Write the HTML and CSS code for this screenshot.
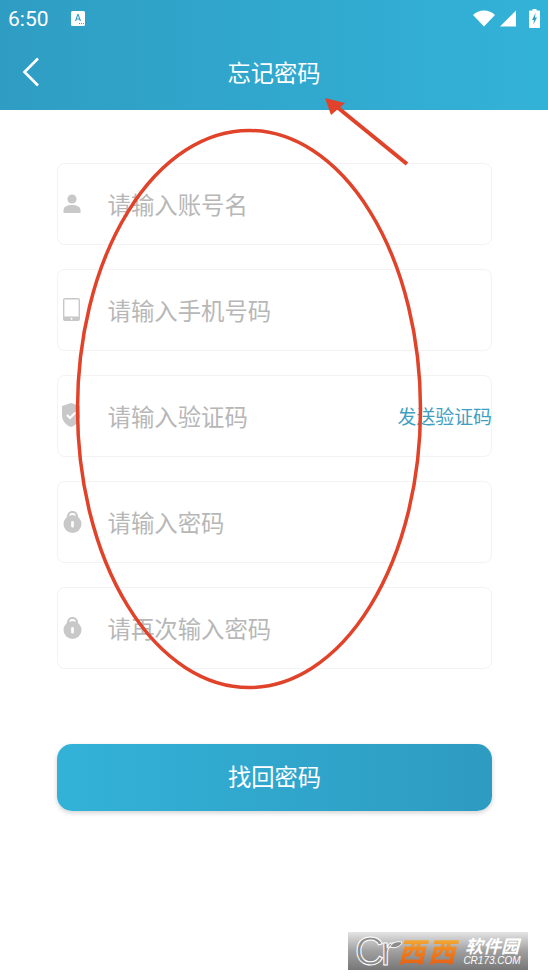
FILE: index.html
```html
<!DOCTYPE html>
<html lang="zh">
<head>
<meta charset="utf-8">
<title>忘记密码</title>
<link rel="stylesheet" href="styles.css">
</head>
<body>
<div class="page">
  <header class="header">
    <div class="statusbar">
      <div class="status-left">
        <span class="time">6:50</span>
        <svg class="notif" viewBox="0 0 14 15"><path d="M1.500 0h11A1.500 1.500 0 0 1 14 1.500v12a1.500 1.500 0 0 1-1.500 1.500h-11A1.500 1.500 0 0 1 0 13.500v-12A1.500 1.500 0 0 1 1.500 0z" fill="#fff"/><path d="M4 10l2.400-7h1.200L10 10H8.800l-.5-1.600H5.700L5.200 10zM6 7.400h2L7 4.500z" fill="#2f9fc6"/><path d="M8 12.500h1M10 12.500h1M12 12.500h.8" stroke="#2f9fc6" stroke-width="1"/></svg>
      </div>
      <div class="status-right">
        <svg class="wifi" viewBox="0 0 22 16"><path d="M0 4.500C3 1.700 6.800 0 11 0s8 1.700 11 4.500L11 16z" fill="#fff"/></svg>
        <svg class="signal" viewBox="0 0 16 16"><path d="M0 16L16 0v16z" fill="#fff"/></svg>
        <svg class="battery" viewBox="0 0 11 19"><path d="M3.500 0h4v1.500H10a1 1 0 0 1 1 1V18a1 1 0 0 1-1 1H1a1 1 0 0 1-1-1V2.500a1 1 0 0 1 1-1h2.500z" fill="#fff"/><path d="M6.500 4L3 11h2l-.7 4.500L8 8.500H6z" fill="#2f9fc6"/></svg>
      </div>
    </div>
    <div class="navbar">
      <svg class="back" viewBox="0 0 18 30"><path d="M16 1.500L2.500 15 16 28.500" fill="none" stroke="#fff" stroke-width="2.600"/></svg>
      <h1 class="title">忘记密码</h1>
    </div>
  </header>

  <main class="form">
    <div class="field">
      <span class="slot"><svg class="icon-person" viewBox="0 0 18 19"><circle cx="9" cy="5" r="4.600" fill="#c8c8c8"/><path d="M0.500 19v-3c0-3 3.500-5 8.500-5s8.500 2 8.500 5v3z" fill="#c8c8c8"/></svg></span>
      <span class="placeholder">请输入账号名</span>
    </div>
    <div class="field">
      <span class="slot"><svg class="icon-phone" viewBox="0 0 17 23"><path d="M2 0h13a2 2 0 0 1 2 2v19a2 2 0 0 1-2 2H2a2 2 0 0 1-2-2V2a2 2 0 0 1 2-2zm-.6 1.400v17h14.200v-17z" fill="#c8c8c8" fill-rule="evenodd"/><circle cx="8.500" cy="20.700" r="1" fill="#fff"/></svg></span>
      <span class="placeholder">请输入手机号码</span>
    </div>
    <div class="field">
      <span class="slot"><svg class="icon-shield" viewBox="0 0 18 24"><path d="M9 0l9 3v9c0 6-4 10-9 12-5-2-9-6-9-12V3z" fill="#c8c8c8"/><path d="M5 12l3 3 5.500-5.500" fill="none" stroke="#fff" stroke-width="2.200"/></svg></span>
      <span class="placeholder">请输入验证码</span>
      <span class="send">发送验证码</span>
    </div>
    <div class="field">
      <span class="slot"><svg class="icon-lock" viewBox="0 0 19 22"><path d="M5 9V5.500a4.500 4.500 0 0 1 9 0V9" fill="none" stroke="#c8c8c8" stroke-width="2.200"/><circle cx="9.500" cy="13" r="9" fill="#c8c8c8"/><rect x="8.200" y="10" width="2.600" height="6.500" rx="1.300" fill="#fff"/></svg></span>
      <span class="placeholder">请输入密码</span>
    </div>
    <div class="field">
      <span class="slot"><svg class="icon-lock" viewBox="0 0 19 22"><path d="M5 9V5.500a4.500 4.500 0 0 1 9 0V9" fill="none" stroke="#c8c8c8" stroke-width="2.200"/><circle cx="9.500" cy="13" r="9" fill="#c8c8c8"/><rect x="8.200" y="10" width="2.600" height="6.500" rx="1.300" fill="#fff"/></svg></span>
      <span class="placeholder">请再次输入密码</span>
    </div>
    <button class="submit" type="button">找回密码</button>
  </main>

  <svg class="annotation" viewBox="0 0 548 980">
    <ellipse cx="249" cy="409" rx="171.500" ry="278.500" fill="none" stroke="#e0432a" stroke-width="3.500"/>
    <path d="M407 164L337 107" fill="none" stroke="#e0432a" stroke-width="4"/>
    <path d="M325 98L345 103 331 115z" fill="#e0432a"/>
  </svg>

  <div class="watermark">
    <span class="wm-cr">Cr</span>
    <svg class="wm-leaf" viewBox="0 0 14 8"><path d="M1 6C3 1 9 0 13 1 12 5 7 8 1 6z" fill="#8c8c8c" stroke="#fff" stroke-width="1"/></svg>
    <span class="wm-xi">西西</span>
    <span class="wm-right">
      <span class="wm-cn">软件园</span>
      <span class="wm-en">CR173.COM</span>
    </span>
  </div>
</div>
</body>
</html>
```
FILE: styles.css
```css
* { box-sizing: border-box; }
html, body { margin: 0; padding: 0; background: #fff; }
body { font-family: "Noto Sans CJK SC", "Noto Sans", sans-serif; }
.page { position: relative; width: 548px; height: 980px; overflow: hidden; background: #fff; }

.header { height: 110px; background: linear-gradient(90deg, #2f9dc3 0%, #33b2d8 100%); color: #fff; }
.statusbar { height: 36px; display: flex; justify-content: space-between; align-items: center; padding: 1px 8px 0 8px; }
.status-left { display: flex; align-items: center; gap: 22px; }
.time { font-family: Roboto, sans-serif; font-size: 21px; line-height: 24px; }
.notif { width: 14px; height: 15px; }
.status-right { display: flex; align-items: center; }
.wifi { width: 22px; height: 17px; margin-right: 5px; }
.signal { width: 16px; height: 17px; margin-right: 13px; }
.battery { width: 11px; height: 19px; }

.navbar { position: relative; height: 74px; display: flex; align-items: center; justify-content: center; }
.back { position: absolute; left: 22px; top: 21px; width: 18px; height: 30px; }
.title { margin: 0 0 3px; font-size: 23.300px; line-height: 30px; font-weight: 400; }

.form { display: flex; flex-direction: column; gap: 24px; padding: 53px 56px 0 57px; }
.field { height: 82px; border: 1.500px solid #f3f3f3; border-radius: 8px; display: flex; align-items: center; padding-left: 5px; }
.slot { flex: none; width: 19px; display: flex; align-items: center; }
.icon-person { width: 18px; height: 19px; margin-bottom: 1px; }
.icon-phone { width: 17px; height: 23px; margin-bottom: 1px; }
.icon-shield { width: 18px; height: 24px; margin: 0 0 2px -1px; }
.icon-lock { width: 19px; height: 22px; }
.placeholder { margin: 0 0 1px 25.500px; font-size: 23.400px; line-height: 30px; color: #b7b7b7; }
.send { margin-left: auto; font-size: 18.900px; line-height: 26px; color: #409fc1; margin-right: -1px; }

.submit { margin-top: 51px; height: 67px; border: 0; border-radius: 15px; background: linear-gradient(90deg, #33b2d8 0%, #2e9bc1 100%); color: #fff; font-family: inherit; font-size: 23.300px; font-weight: 400; box-shadow: 0 2px 5px rgba(0, 0, 0, 0.18); padding: 0 0 3px; }

.annotation { position: absolute; left: 0; top: 0; width: 548px; height: 980px; pointer-events: none; }

.watermark { position: absolute; left: 348px; top: 932px; width: 180px; height: 38px; display: flex; align-items: center; background: linear-gradient(180deg, #e4e4e4 0%, #a0a0a0 50%, #777 100%); }
.wm-cr { font-family: "Liberation Sans", sans-serif; font-size: 40px; line-height: 38px; color: #8c8c8c; -webkit-text-stroke: 1px #fff; margin-left: 7px; letter-spacing: -3px; width: 43px; flex: none; }
.wm-leaf { position: absolute; left: 41px; top: 9px; width: 14px; height: 8px; }
.wm-xi { font-size: 27px; line-height: 38px; font-weight: 900; font-style: italic; background: linear-gradient(180deg, #f7c53e 0%, #ee7a1c 55%, #e2570f 100%); -webkit-background-clip: text; background-clip: text; -webkit-text-fill-color: transparent; letter-spacing: 3px; width: 62px; flex: none; }
.wm-right { display: flex; flex-direction: column; align-items: center; margin-left: 2px; width: 60px; color: #fff; }
.wm-cn { font-size: 18px; line-height: 19px; font-weight: 700; font-style: italic; }
.wm-en { font-family: "Liberation Sans", sans-serif; font-size: 10px; line-height: 11px; font-style: italic; }
```
